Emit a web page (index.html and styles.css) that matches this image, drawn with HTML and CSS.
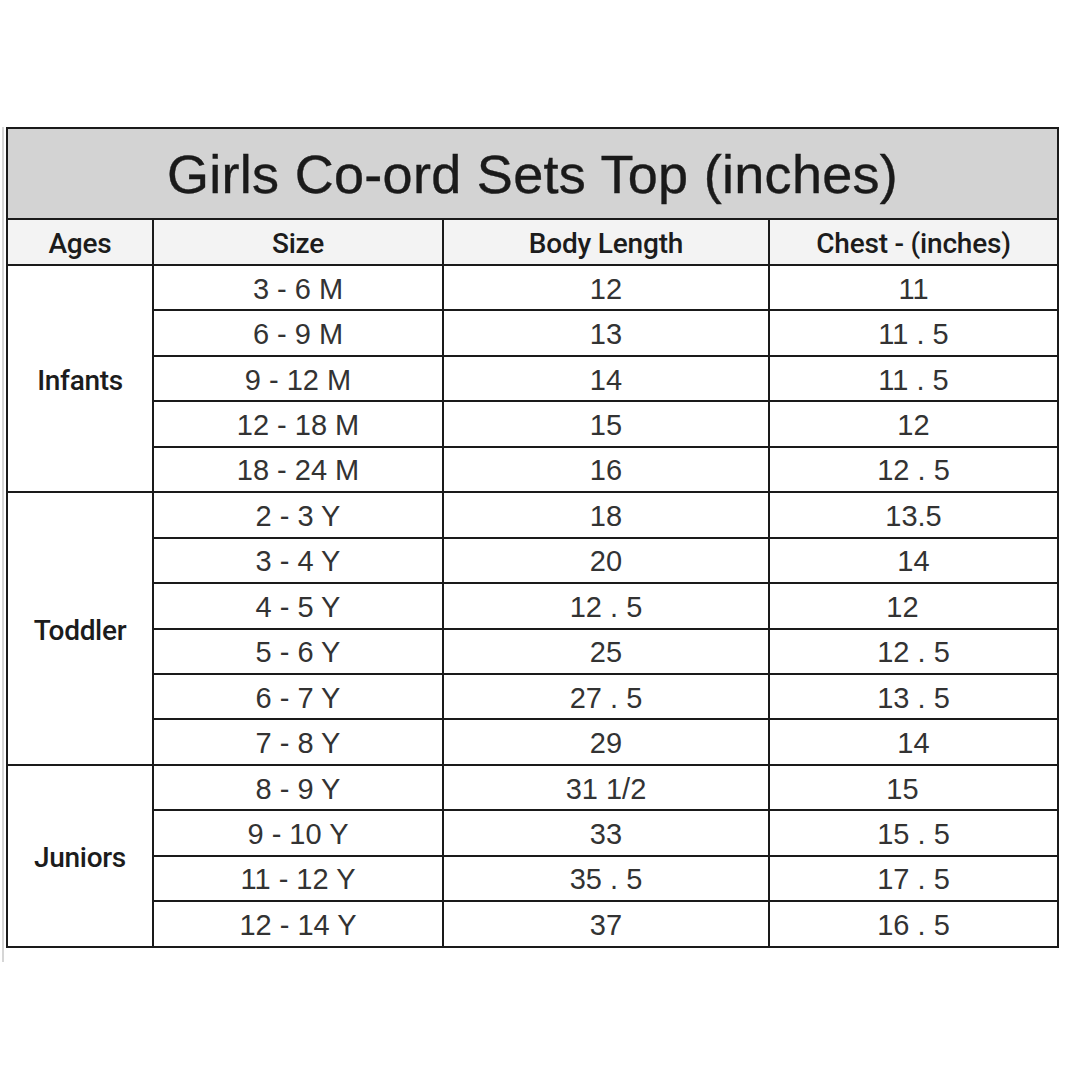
FILE: index.html
```html
<!DOCTYPE html>
<html>
<head>
<meta charset="utf-8">
<link rel="stylesheet" href="styles.css">
</head>
<body>
<div class="sheet">
  <div class="frame">
  <table class="chart">
    <colgroup>
      <col class="c-age"><col class="c-size"><col class="c-body"><col class="c-chest">
    </colgroup>
    <tr class="title-row"><th colspan="4" class="title">Girls Co-ord Sets Top (inches)</th></tr>
    <tr class="head-row">
      <th>Ages</th><th>Size</th><th>Body Length</th><th>Chest - (inches)</th>
    </tr>
    <tr><td class="age" rowspan="5">Infants</td><td>3 - 6 M</td><td>12</td><td>11</td></tr>
    <tr><td>6 - 9 M</td><td>13</td><td>11 . 5</td></tr>
    <tr><td>9 - 12 M</td><td>14</td><td>11 . 5</td></tr>
    <tr><td>12 - 18 M</td><td>15</td><td>12</td></tr>
    <tr><td>18 - 24 M</td><td>16</td><td>12 . 5</td></tr>
    <tr><td class="age" rowspan="6">Toddler</td><td>2 - 3 Y</td><td>18</td><td>13.5</td></tr>
    <tr><td>3 - 4 Y</td><td>20</td><td>14</td></tr>
    <tr><td>4 - 5 Y</td><td>12 . 5</td><td class="shift">12</td></tr>
    <tr><td>5 - 6 Y</td><td>25</td><td>12 . 5</td></tr>
    <tr><td>6 - 7 Y</td><td>27 . 5</td><td>13 . 5</td></tr>
    <tr><td>7 - 8 Y</td><td>29</td><td>14</td></tr>
    <tr><td class="age" rowspan="4">Juniors</td><td>8 - 9 Y</td><td>31 1/2</td><td class="shift">15</td></tr>
    <tr><td>9 - 10 Y</td><td>33</td><td>15 . 5</td></tr>
    <tr><td>11 - 12 Y</td><td>35 . 5</td><td>17 . 5</td></tr>
    <tr><td>12 - 14 Y</td><td>37</td><td>16 . 5</td></tr>
  </table>
  </div>
</div>
</body>
</html>
```
FILE: styles.css
```css
html, body {
  margin: 0;
  padding: 0;
  background: #ffffff;
}
.sheet {
  padding: 127px 0 0 2px;
}
.frame {
  display: inline-block;
  border-left: 2px solid #d6d6d6;
  padding: 0 0 14px 2px;
}
.chart {
  border-collapse: collapse;
  width: 1051px;
  table-layout: fixed;
  font-family: "Liberation Sans", Arial, sans-serif;
  color: #2a2a2a;
}
.c-age { width: 146px; }
.c-size { width: 290px; }
.c-body { width: 326px; }
.c-chest { width: 289px; }
.chart th, .chart td {
  border: 2px solid #1a1a1a;
  text-align: center;
  padding: 0;
}
.title-row { height: 91px; }
.title {
  background: #d3d3d3;
  font-family: "Liberation Sans", Arial, sans-serif;
  font-weight: 400;
  font-size: 54px;
  color: #1a1a1a;
  letter-spacing: 0.3px;
  padding-top: 4px;
  -webkit-text-stroke: 0.4px #1a1a1a;
}
.head-row { height: 46px; }
.head-row th {
  background: #f3f3f3;
  font-family: Roboto, "Liberation Sans", sans-serif;
  font-weight: 500;
  font-size: 28px;
  letter-spacing: -0.2px;
  color: #1c1c1c;
  padding-top: 3px;
}
.chart td {
  height: 40.45px;
  font-family: "Liberation Sans", Arial, sans-serif;
  font-size: 29px;
  letter-spacing: 0;
  color: #333333;
  padding-top: 3px;
}
.chart td.age {
  font-family: Roboto, "Liberation Sans", sans-serif;
  font-weight: 500;
  font-size: 28px;
  letter-spacing: -0.3px;
  color: #1c1c1c;
  padding-top: 4px;
}
.chart td.shift { text-indent: -22px; }
```
